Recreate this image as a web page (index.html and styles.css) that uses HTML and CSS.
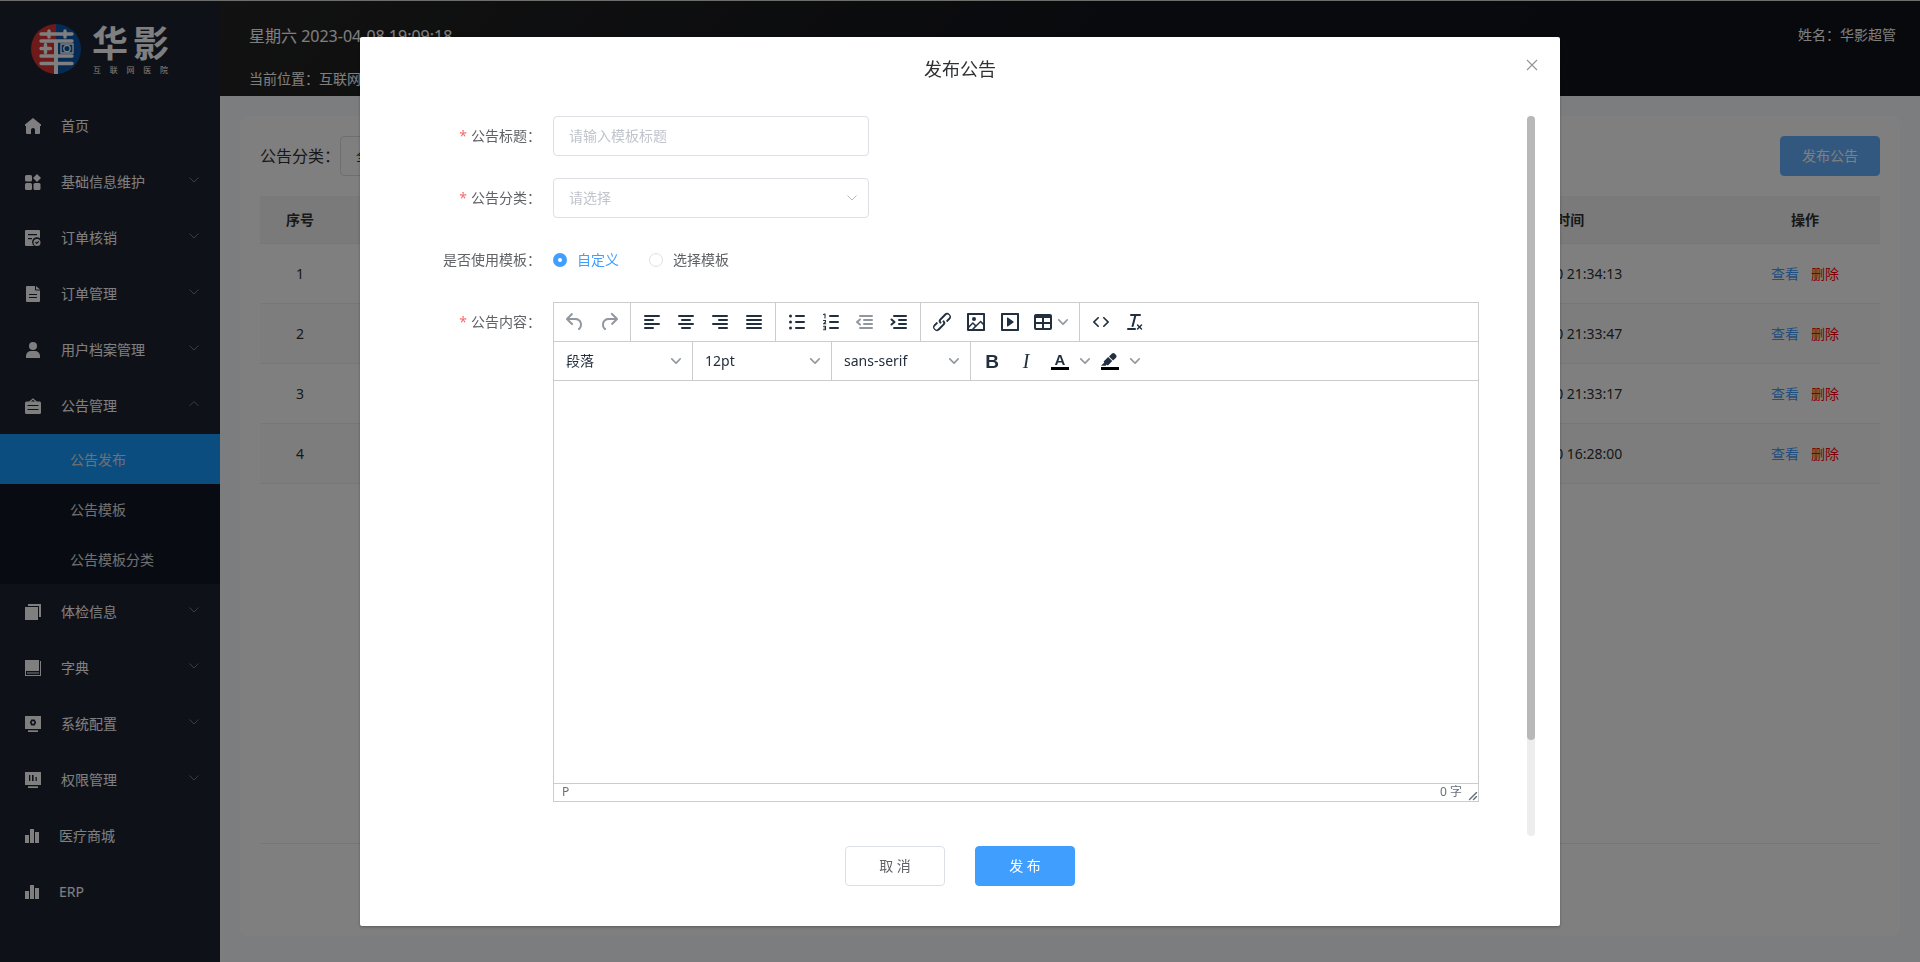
FILE: index.html
```html
<!DOCTYPE html>
<html lang="zh-CN">
<head>
<meta charset="utf-8">
<title>发布公告</title>
<link rel="stylesheet" href="styles.css">
</head>
<body>
<svg class="sprite" aria-hidden="true">
  <symbol id="chev" viewBox="0 0 12 12"><path d="M1.500 3.500 6 8l4.500-4.500" fill="none" stroke="currentColor"/></symbol>
  <symbol id="chev-up" viewBox="0 0 12 12"><path d="M1.500 8 6 3.500 10.500 8" fill="none" stroke="currentColor"/></symbol>
  <symbol id="tchev" viewBox="0 0 10 10"><path d="M8.700 2.200c.3-.3.8-.3 1 0 .4.4.4.900 0 1.200L5.700 7.800c-.3.3-.900.3-1.200 0L.2 3.400a.8.8 0 010-1.200c.3-.3.8-.3 1.100 0L5 6l3.700-3.800z"/></symbol>
  <symbol id="bars" viewBox="0 0 14 16"><path d="M0 7h4v8H0zM5 1h4v14H5zM10 4h4v11h-4z"/></symbol>
</svg>
<div class="app">
  <aside class="sidebar">
    <div class="logo">
      <svg class="logo-mark" viewBox="0 0 50 50" aria-hidden="true">
        <path d="M25 0a25 25 0 0 0 0 50z" fill="#dc3434"/><path d="M25 0a25 25 0 0 1 0 50z" fill="#0a56a8"/>
        <g fill="none" stroke="#fff" stroke-width="3.400" stroke-linecap="round">
          <path d="M10 10h31M18 7v6M34 7v6M10 17h31M10 32h31M10 39.500h31M14.500 20.500v8M10 24.500h9.500"/>
          <path d="M25 17v33" stroke-width="4" stroke-linecap="butt"/>
          <path d="M30 20h12v9H30z" stroke-width="1.300"/><circle cx="36" cy="24.500" r="3.200" stroke-width="1.300"/>
        </g>
      </svg>
      <div class="logo-text"><strong><span>华</span><span>影</span></strong><small><span>互</span><span>联</span><span>网</span><span>医</span><span>院</span></small></div>
    </div>
    <nav class="menu">
      <a href="#" class="item"><svg viewBox="0 0 16 16"><path d="M8 0 16 6.500V8h-1v7a1 1 0 0 1-1 1h-4v-4a2 2 0 0 0-4 0v4H2a1 1 0 0 1-1-1V8H0V6.500z"/></svg><span>首页</span></a>
      <a href="#" class="item"><svg viewBox="0 0 16 16"><rect y="1" width="7" height="6.500" rx="1.500"/><path d="m12 0 4 4-4 4-4-4z"/><rect y="9" width="7" height="7" rx="1.500"/><rect x="8.500" y="9" width="7" height="7" rx="1.500"/></svg><span>基础信息维护</span><svg class="arrow"><use href="#chev"/></svg></a>
      <a href="#" class="item"><svg viewBox="0 0 16 16"><path fill-rule="evenodd" d="M1 0h13a1 1 0 0 1 1 1v7.200a4.500 4.500 0 0 0-6 7.800H1a1 1 0 0 1-1-1V1a1 1 0 0 1 1-1zm2 4v1.200h9V4zm0 4v1.200h4V8z"/><path fill-rule="evenodd" d="M12 9a3.500 3.500 0 1 1 0 7 3.500 3.500 0 0 1 0-7zm-2 3.500 1.700 1.700 2.500-2.500-.8-.8-1.700 1.700-.900-.900z"/></svg><span>订单核销</span><svg class="arrow"><use href="#chev"/></svg></a>
      <a href="#" class="item"><svg viewBox="0 0 16 16"><path fill-rule="evenodd" d="M2 0h8v3.500a1 1 0 0 0 1 1h4V15a1 1 0 0 1-1 1H2a1 1 0 0 1-1-1V1a1 1 0 0 1 1-1zm2 8v1h8V8zm0 3v1h8v-1z"/><path d="m11 0 4 3.500h-4z"/></svg><span>订单管理</span><svg class="arrow"><use href="#chev"/></svg></a>
      <a href="#" class="item"><svg viewBox="0 0 16 16"><circle cx="8" cy="4" r="4"/><path d="M1 16v-2a5 5 0 0 1 5-5h4a5 5 0 0 1 5 5v2z"/></svg><span>用户档案管理</span><svg class="arrow"><use href="#chev"/></svg></a>
      <a href="#" class="item"><svg viewBox="0 0 16 16"><path d="M4.500 4 8 1l3.500 3" fill="none" stroke="currentColor" stroke-width="1.200"/><path fill-rule="evenodd" d="M1.500 3.500h13A1.500 1.500 0 0 1 16 5v9.500a1.500 1.500 0 0 1-1.500 1.500h-13A1.500 1.500 0 0 1 0 14.500V5a1.500 1.500 0 0 1 1.500-1.500zM2.500 7v1h11V7zm0 4v1h11v-1z"/></svg><span>公告管理</span><svg class="arrow"><use href="#chev-up"/></svg></a>
      <div class="submenu">
        <a href="#" class="sub active">公告发布</a>
        <a href="#" class="sub">公告模板</a>
        <a href="#" class="sub">公告模板分类</a>
      </div>
      <a href="#" class="item"><svg viewBox="0 0 16 16"><path d="M0 3h13v13H0zM3 0h13v13h-2V2H3z"/></svg><span>体检信息</span><svg class="arrow"><use href="#chev"/></svg></a>
      <a href="#" class="item"><svg viewBox="0 0 16 16"><path d="M0 0h14v11H1v4h14V1h1v15H0zM2 12.500h12v1H2z"/></svg><span>字典</span><svg class="arrow"><use href="#chev"/></svg></a>
      <a href="#" class="item"><svg viewBox="0 0 16 16"><path fill-rule="evenodd" d="M0 0h16v13H0zM6.300 3.500 4.800 6.500l1.500 3h3.400l1.500-3-1.500-3z"/><circle cx="8" cy="6.500" r="1.200"/><path d="M3 14.300h10V16H3z"/></svg><span>系统配置</span><svg class="arrow"><use href="#chev"/></svg></a>
      <a href="#" class="item"><svg viewBox="0 0 16 16"><path fill-rule="evenodd" d="M0 0h16v13H0zM4 3v6h1.300V3zm3 0v6h1.600V3zm3.500 2v4h1.300V5z"/><path d="M3 14.300h10V16H3z"/></svg><span>权限管理</span><svg class="arrow"><use href="#chev"/></svg></a>
      <a href="#" class="item"><svg class="narrow"><use href="#bars"/></svg><span>医疗商城</span></a>
      <a href="#" class="item"><svg class="narrow"><use href="#bars"/></svg><span>ERP</span></a>
    </nav>
  </aside>
  <div class="page">
    <header class="topbar">
      <div><p class="clock">星期六 2023-04-08 19:09:18</p><p class="crumb">当前位置：互联网医院</p></div>
      <p class="user">姓名：华影超管</p>
    </header>
    <main class="card">
      <div class="filter">
        <label for="cat">公告分类：</label>
        <select id="cat"><option>全部</option></select>
        <button class="primary soft" type="button">发布公告</button>
      </div>
      <div class="table-wrap">
      <table>
        <colgroup><col class="c-no"><col><col><col><col><col class="c-op"></colgroup>
        <thead><tr><th>序号</th><th></th><th></th><th></th><th>发布时间</th><th>操作</th></tr></thead>
        <tbody>
          <tr><td>1</td><td></td><td></td><td></td><td>2022-12-10 21:34:13</td><td><a href="#">查看</a><a href="#" class="del">删除</a></td></tr>
          <tr><td>2</td><td></td><td></td><td></td><td>2022-12-10 21:33:47</td><td><a href="#">查看</a><a href="#" class="del">删除</a></td></tr>
          <tr><td>3</td><td></td><td></td><td></td><td>2022-12-10 21:33:17</td><td><a href="#">查看</a><a href="#" class="del">删除</a></td></tr>
          <tr><td>4</td><td></td><td></td><td></td><td>2022-12-10 16:28:00</td><td><a href="#">查看</a><a href="#" class="del">删除</a></td></tr>
        </tbody>
      </table>
      </div>
    </main>
  </div>
</div>

<div class="overlay">
  <section class="dialog" role="dialog" aria-labelledby="dlg-title">
    <header class="dialog-head">
      <h2 id="dlg-title">发布公告</h2>
      <button class="close" type="button" aria-label="关闭"><svg viewBox="0 0 12 12"><path d="m1 1 10 10M11 1 1 11" stroke="currentColor" stroke-width="1.100"/></svg></button>
    </header>
    <div class="dialog-body">
      <form class="form">
        <div class="row"><label class="req" for="title">公告标题：</label><input id="title" class="field" type="text" placeholder="请输入模板标题"></div>
        <div class="row"><label class="req" for="type">公告分类：</label>
          <div class="picker"><select id="type" class="field"><option>请选择</option></select><svg><use href="#chev"/></svg></div></div>
        <div class="row" role="radiogroup" aria-labelledby="tpl"><span class="label" id="tpl">是否使用模板：</span>
          <div class="radios">
            <label><input type="radio" name="tpl" checked><span>自定义</span></label>
            <label><input type="radio" name="tpl"><span>选择模板</span></label>
          </div></div>
        <div class="row"><label class="req" for="content">公告内容：</label>
          <div class="editor">
            <div class="bar">
              <div class="group">
                <button type="button" disabled aria-label="撤销"><svg viewBox="0 0 24 24"><path d="M6.400 8H12c3.700 0 6.200 2 6.800 5.100.6 2.700-.4 5.600-2.300 6.800a1 1 0 01-1-1.800c1.100-.6 1.800-2.700 1.400-4.600-.5-2.100-2.100-3.500-4.900-3.500H6.400l3.300 3.300a1 1 0 11-1.400 1.400l-5-5a1 1 0 010-1.400l5-5a1 1 0 011.400 1.400L6.400 8z"/></svg></button>
                <button type="button" disabled aria-label="重做"><svg viewBox="0 0 24 24"><path d="M17.600 10H12c-2.800 0-4.400 1.400-4.900 3.500-.4 2 .3 4 1.400 4.600a1 1 0 11-1 1.800c-2-1.200-2.900-4.100-2.300-6.800.6-3 3-5.100 6.800-5.100h5.600l-3.300-3.300a1 1 0 111.400-1.400l5 5a1 1 0 010 1.400l-5 5a1 1 0 01-1.400-1.400l3.300-3.300z"/></svg></button>
              </div>
              <div class="group">
                <button type="button" aria-label="左对齐"><svg viewBox="0 0 24 24" class="ln"><path d="M5 6h14M5 10h8M5 14h14M5 18h8"/></svg></button>
                <button type="button" aria-label="居中"><svg viewBox="0 0 24 24" class="ln"><path d="M5 6h14M8 10h8M5 14h14M8 18h8"/></svg></button>
                <button type="button" aria-label="右对齐"><svg viewBox="0 0 24 24" class="ln"><path d="M5 6h14M11 10h8M5 14h14M11 18h8"/></svg></button>
                <button type="button" aria-label="两端对齐"><svg viewBox="0 0 24 24" class="ln"><path d="M5 6h14M5 10h14M5 14h14M5 18h14"/></svg></button>
              </div>
              <div class="group">
                <button type="button" aria-label="项目符号"><svg viewBox="0 0 24 24" class="ln"><path d="M11 6h8M11 12h8M11 18h8"/><path d="M5.500 6h0M5.500 12h0M5.500 18h0" stroke-width="3"/></svg></button>
                <button type="button" aria-label="编号列表"><svg viewBox="0 0 24 24" class="ln"><path d="M11 6h8M11 12h8M11 18h8"/><path d="M4.500 4.500 6 4v4M4.500 10.500h2v1.500l-2 1.800h2.300M4.500 16.200h2v3.600h-2M5 18h1.500" stroke-width="1.100"/></svg></button>
                <button type="button" disabled aria-label="减少缩进"><svg viewBox="0 0 24 24" class="ln"><path d="M7 6h12M11 10h8M11 14h8M7 18h12"/><path d="M7 9.500 4 12l3 2.500"/></svg></button>
                <button type="button" aria-label="增加缩进"><svg viewBox="0 0 24 24" class="ln"><path d="M7 6h12M12 10h7M12 14h7M7 18h12"/><path d="M4.500 9.500l3 2.500-3 2.500"/></svg></button>
              </div>
              <div class="group">
                <button type="button" aria-label="链接"><svg viewBox="0 0 24 24"><path d="M6.200 12.300a1 1 0 011.400 1.400l-2.100 2a2 2 0 102.700 2.800l4.800-4.800a1 1 0 000-1.400 1 1 0 111.400-1.300 2.900 2.900 0 010 4L9.600 20a3.900 3.900 0 01-5.500-5.500l2-2zm11.600-.6a1 1 0 01-1.400-1.400l2-2a2 2 0 10-2.600-2.800L11 10.300a1 1 0 000 1.400A1 1 0 119.600 13a2.900 2.900 0 010-4L14.400 4a3.900 3.900 0 015.500 5.500l-2 2z"/></svg></button>
                <button type="button" aria-label="图片"><svg viewBox="0 0 24 24"><path fill-rule="evenodd" d="M5 15.700l3.300-3.200c.3-.3.7-.3 1 0L12 15l4.100-4c.3-.4.8-.4 1 0l2 1.900V5H5v10.700zM5 18V19h3l2.800-2.900-2-2L5 17.900zm14-3l-2.500-2.400-6.400 6.500H19v-4zM4 3h16c.6 0 1 .4 1 1v16c0 .6-.4 1-1 1H4a1 1 0 01-1-1V4c0-.6.4-1 1-1z"/><circle cx="10" cy="9" r="2"/></svg></button>
                <button type="button" aria-label="媒体"><svg viewBox="0 0 24 24"><path fill-rule="evenodd" d="M4 3h16c.6 0 1 .4 1 1v16c0 .6-.4 1-1 1H4a1 1 0 01-1-1V4c0-.6.4-1 1-1zm1 2v14h14V5H5zm4.800 2.600l5.600 4a.5.5 0 010 .8l-5.600 4A.5.5 0 019 16V8a.5.5 0 01.8-.4z"/></svg></button>
                <button type="button" class="table-btn" aria-label="表格"><svg viewBox="0 0 24 24"><path fill-rule="evenodd" d="M19 4a2 2 0 012 2v12a2 2 0 01-2 2H5a2 2 0 01-2-2V6c0-1.100.9-2 2-2h14zM5 14v4h6v-4H5zm14 0h-6v4h6v-4zm0-6h-6v4h6V8zM5 12h6V8H5v4z"/></svg><svg class="tc"><use href="#tchev"/></svg></button>
              </div>
              <div class="group last">
                <button type="button" aria-label="源代码"><svg viewBox="0 0 24 24"><path d="M9.800 15.700c.3.3.3.8 0 1-.3.4-.9.4-1.200 0l-4.400-4.100a.8.8 0 010-1.200l4.400-4.200c.3-.3.9-.3 1.200 0 .3.3.3.8 0 1.100L6 12l3.800 3.700zM14.200 15.700c-.3.3-.3.8 0 1 .4.4.9.4 1.200 0l4.400-4.100c.3-.3.3-.9 0-1.200l-4.400-4.200a.8.8 0 00-1.200 0c-.3.3-.3.8 0 1.100L18 12l-3.800 3.700z"/></svg></button>
                <button type="button" aria-label="清除格式"><svg viewBox="0 0 24 24"><path d="M13.200 6a1 1 0 010 .2l-2.600 10a1 1 0 01-1 .8h-.2a.8.8 0 01-.8-1l2.600-10H8a1 1 0 110-2h9a1 1 0 010 2h-3.800zM5 18h7a1 1 0 010 2H5a1 1 0 010-2zm13 1.500L16.500 18 15 19.500a.7.7 0 01-1-1l1.500-1.500-1.500-1.500a.7.7 0 011-1l1.500 1.500 1.500-1.500a.7.7 0 011 1L17.500 17l1.500 1.500a.7.7 0 01-1 1z"/></svg></button>
              </div>
            </div>
            <div class="bar">
              <div class="group"><div class="picker tsel"><select aria-label="段落格式"><option>段落</option></select><svg><use href="#tchev"/></svg></div></div>
              <div class="group"><div class="picker tsel"><select aria-label="字号"><option>12pt</option></select><svg><use href="#tchev"/></svg></div></div>
              <div class="group"><div class="picker tsel"><select aria-label="字体"><option>sans-serif</option></select><svg><use href="#tchev"/></svg></div></div>
              <div class="group last">
                <button type="button" aria-label="加粗"><svg viewBox="0 0 24 24"><text class="g-bold" x="12" y="19" text-anchor="middle">B</text></svg></button>
                <button type="button" aria-label="斜体"><svg viewBox="0 0 24 24"><text class="g-italic" x="12" y="19" text-anchor="middle">I</text></svg></button>
                <button type="button" aria-label="文字颜色"><svg viewBox="0 0 24 24"><path d="M3 18h18v3H3z" fill="#000"/><text class="g-color" x="12" y="16" text-anchor="middle">A</text></svg></button>
                <button type="button" class="more" aria-label="更多文字颜色"><svg class="tc"><use href="#tchev"/></svg></button>
                <button type="button" aria-label="背景颜色"><svg viewBox="0 0 24 24"><path d="M3 18h18v3H3z" fill="#000"/><path d="M7.700 16.700H3l3.300-3.300-.7-.8L10.200 8l4 4.100-4 4.200c-.2.2-.6.2-.8 0l-.6-.7-1.100 1.100zm5-7.500L11 7.400l3-2.900a2 2 0 012.600 0L18 6c.7.7.7 2 0 2.700l-2.900 2.900-1.800-1.800-.5-.6z"/></svg></button>
                <button type="button" class="more" aria-label="更多背景颜色"><svg class="tc"><use href="#tchev"/></svg></button>
              </div>
            </div>
            <textarea id="content"></textarea>
            <div class="status"><span>P</span><span class="count">0 字</span><svg viewBox="0 0 10 10"><path d="M8.100 1.100A.5.5 0 119 2l-7 7A.5.5 0 111 8l7-7zM8.100 5.100A.5.5 0 119 6l-3 3A.5.5 0 115 8l3-3z"/></svg></div>
          </div></div>
      </form>
      <div class="scroll" aria-hidden="true"><div class="thumb"></div><div class="rest"></div></div>
    </div>
    <footer class="dialog-foot">
      <button class="plain" type="button">取 消</button>
      <button class="primary" type="button">发 布</button>
    </footer>
  </section>
</div>
</body>
</html>
```
FILE: styles.css
```css
* { box-sizing: border-box; }
body {
  margin: 0;
  font: 14px/20px "Noto Sans", "Noto Sans CJK SC", sans-serif;
  color: #303133;
}
button, input, select, textarea { font: inherit; color: inherit; margin: 0; }
p, h2 { margin: 0; }
a { text-decoration: none; }
svg { display: block; fill: currentColor; }
.sprite { position: absolute; width: 0; height: 0; }

.app { display: flex; min-height: 100vh; border-top: 1px solid #dadcd6; background: #f8fafe; }

/* sidebar */
.sidebar { width: 220px; flex: none; background: #1e2233; color: #fff; }
.logo { display: flex; gap: 11px; height: 97px; padding: 23px 0 0 31px; }
.logo-mark { width: 50px; height: 50px; }
.logo-text { width: 77px; font-family: "Liberation Sans", "Noto Sans CJK SC", sans-serif; }
.logo-text strong { display: flex; justify-content: space-between; font-size: 36px; line-height: 42px; font-weight: 700; }
.logo-text small { display: flex; justify-content: space-between; padding: 0 1px; font-size: 8px; line-height: 10px; }
.item { display: flex; align-items: center; height: 56px; padding: 0 20px 0 25px; color: #fff; }
.item svg { width: 16px; height: 16px; flex: none; margin-right: 20px; }
.item .narrow { width: 14px; }
.item span { flex: 1; }
.item .arrow { width: 12px; height: 12px; margin: 0 0 4px; color: #767a84; }
.submenu { background: #101624; }
.sub { display: block; height: 50px; padding: 16px 0 0 70px; color: #e0e0e0; }
.sub.active { background: #189aff; }

/* page */
.page { flex: 1; display: flex; flex-direction: column; }
.topbar {
  display: flex; justify-content: space-between;
  height: 95px; padding: 24px 24px 0 29px;
  background: linear-gradient(135deg, #242424, #13151b 50%, #10121a);
  color: #fff;
}
.clock { font-size: 16px; line-height: 22px; }
.crumb { margin-top: 22px; }
.card { flex: 1; display: flex; flex-direction: column; margin: 20px 20px 26px; padding: 20px 20px 92px; background: #fff; border-radius: 8px; }
.filter { display: flex; align-items: center; margin-bottom: 20px; }
.filter label { width: 80px; font-size: 16px; white-space: nowrap; }
.filter select { width: 200px; height: 40px; padding: 0 15px; appearance: none; background: #fff; border: 1px solid #dcdfe6; border-radius: 4px; }
.filter button { margin-left: auto; }
.table-wrap { flex: 1; border-bottom: 1px solid #ebeef5; }
table { width: 100%; table-layout: fixed; border-collapse: separate; border-spacing: 0; text-align: center; }
.c-no { width: 80px; }
.c-op { width: 150px; }
th, td { height: 60px; padding: 0; border-bottom: 1px solid #ebeef5; }
th { height: 48px; background: #f5f5f5; }
tbody tr:nth-child(even) { background: #fafafa; }
td a { color: #409eff; }
td .del { margin-left: 12px; color: #f00; }

/* buttons */
.primary, .plain { width: 100px; height: 40px; border-radius: 4px; border: 1px solid #409eff; background: #409eff; color: #fff; }
.plain { border-color: #dcdfe6; background: #fff; color: #606266; }
.soft { border-color: #66b1ff; background: #66b1ff; }

/* dialog */
.overlay { position: fixed; inset: 0; display: flex; align-items: center; justify-content: center; background: rgba(0, 0, 0, .5); }
.dialog { width: 1200px; max-width: 100%; background: #fff; border-radius: 2px; box-shadow: 0 1px 3px rgba(0, 0, 0, .3); }
.dialog-head { position: relative; padding: 20px 20px 10px; text-align: center; }
.dialog-head h2 { font-size: 18px; line-height: 24px; font-weight: 400; }
.close { position: absolute; top: 20px; right: 20px; padding: 2px; border: 0; background: none; color: #909399; }
.close svg { width: 12px; height: 12px; }
.dialog-body { display: flex; padding: 25px 25px 0; }
.form { flex: 1; display: flex; flex-direction: column; gap: 22px; padding: 0 48px 34px 0; color: #606266; }
.row { display: flex; }
.row > label, .label { width: 168px; flex: none; padding-right: 12px; line-height: 40px; text-align: right; white-space: nowrap; }
.req::before { content: "*"; margin-right: 4px; color: #f56c6c; }
.field { width: 316px; height: 40px; padding: 0 15px; border: 1px solid #dcdfe6; border-radius: 4px; background: none; appearance: none; }
.field::placeholder, select.field { color: #c0c4cc; opacity: 1; }
.picker { display: grid; align-items: center; }
.picker > * { grid-area: 1 / 1; }
.picker > svg { justify-self: end; width: 12px; height: 12px; margin-right: 11px; color: #b4b8c0; pointer-events: none; }
.radios { display: flex; gap: 30px; align-items: center; height: 40px; }
.radios label { display: flex; align-items: center; gap: 10px; }
.radios input { appearance: none; width: 14px; height: 14px; border: 1px solid #dcdfe6; border-radius: 50%; background: #fff; }
.radios input:checked { border: 5px solid #409eff; }
.radios input:checked + span { color: #409eff; }

/* rich text editor */
.editor { flex: 1; display: flex; flex-direction: column; min-height: 500px; border: 1px solid #ccc; color: #222f3e; }
.bar { display: flex; border-bottom: 1px solid #ccc; height: 39px; }
.group { display: flex; align-items: center; padding: 0 4px; border-right: 1px solid #ccc; }
.group.last { border-right: 0; }
.group button { display: flex; align-items: center; justify-content: center; width: 34px; height: 34px; padding: 0; border: 0; background: none; }
.group button svg { width: 24px; height: 24px; flex: none; }
.group button:disabled { color: #222f3e80; }
.group .table-btn { width: 48px; gap: 3px; padding-left: 4px; justify-content: flex-start; }
.group .more { width: 16px; }
.group button .tc { width: 10px; height: 10px; color: #222f3e80; }
.ln { fill: none; stroke: currentColor; stroke-width: 2; stroke-linecap: round; stroke-linejoin: round; }
.g-bold { font: bold 19px "Liberation Sans", sans-serif; }
.g-italic { font: italic 20px "Liberation Serif", serif; }
.g-color { font: bold 15px "Liberation Sans", sans-serif; }
.tsel select { width: 130px; height: 34px; padding: 0 8px; border: 0; background: none; appearance: none; }
.tsel > svg { width: 10px; height: 10px; margin-right: 7px; color: #222f3e80; }
.editor textarea { flex: 1; width: 100%; padding: 16px; border: 0; outline: 0; resize: none; background: none; }
.status { display: flex; align-items: center; height: 18px; padding-left: 8px; border-top: 1px solid #ccc; font-size: 12px; line-height: 16px; color: #222f3eb3; }
.count { margin-left: auto; margin-right: 6px; }
.status svg { width: 10px; height: 10px; align-self: flex-end; }

.scroll { width: 8px; display: flex; flex-direction: column; background: #ededed; border-radius: 4px; }
.thumb { flex: 13; background: #b8b8b8; border-radius: 4px; }
.rest { flex: 2; }
.dialog-foot { display: flex; justify-content: center; gap: 30px; padding: 10px 20px 40px; }
```
